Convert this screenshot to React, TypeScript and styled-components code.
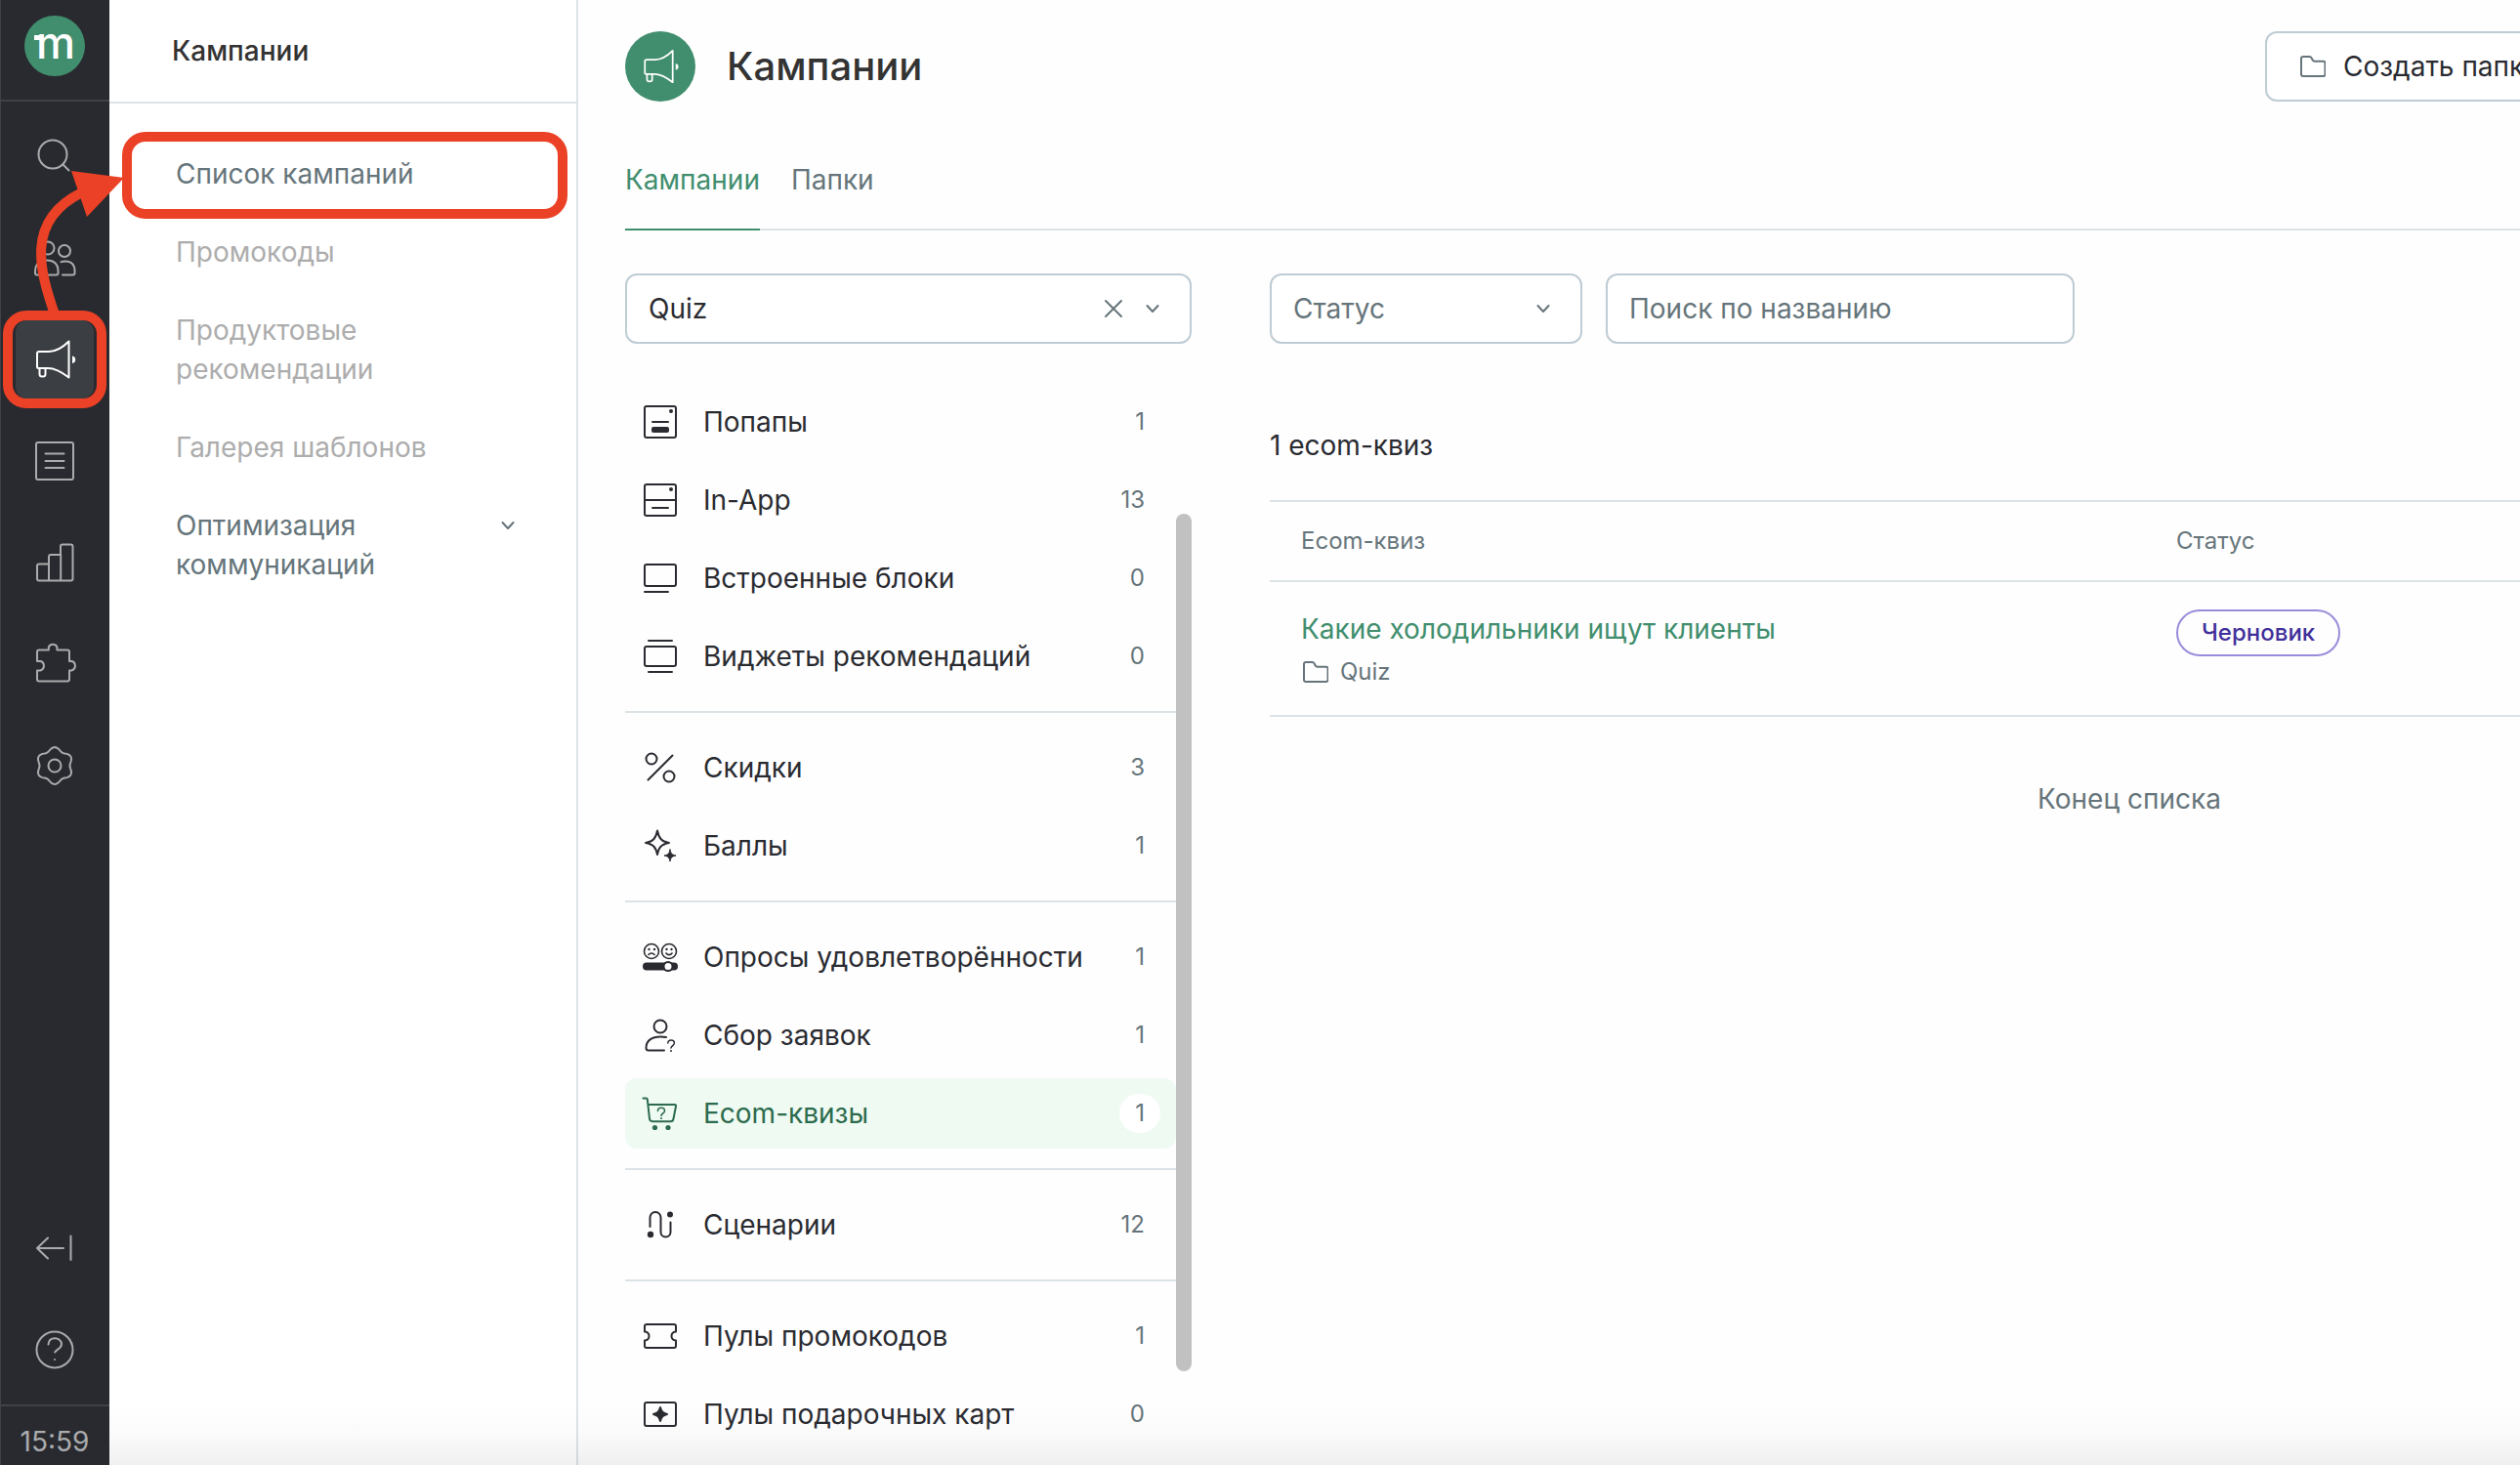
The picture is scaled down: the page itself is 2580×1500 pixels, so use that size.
import React from "react";
import styled, { createGlobalStyle, css } from "styled-components";

const color = {
  rail: "#292a2f",
  railActive: "#3b3e42",
  railLine: "#3f4146",
  railIcon: "#a9abad",
  green: "#418e6e",
  greenDark: "#2c6b4d",
  mint: "#effaf3",
  ink: "#2a2b31",
  title: "#333333",
  muted: "#66757b",
  disabled: "#adadad",
  line: "#dce3e6",
  field: "#bfccd4",
  mark: "#eb4126",
};

const GlobalStyle = createGlobalStyle`
  *, *::before, *::after { box-sizing: border-box; }
  body {
    margin: 0;
    overflow: hidden;
    background: #fefefe;
    color: ${color.ink};
    font: 400 28px/40px Inter, "Noto Sans", sans-serif;
  }
  button, input, select { font: inherit; color: inherit; }
  a { color: inherit; text-decoration: none; }
  svg { display: block; flex: none; }
`;

/* ---------- icons ---------- */

type IconProps = { size?: number; width?: number; children: React.ReactNode };

const Icon = ({ size = 48, width = 2, children }: IconProps) => (
  <svg
    width={size}
    height={size}
    viewBox="0 0 48 48"
    fill="none"
    stroke="currentColor"
    strokeWidth={width}
    strokeLinecap="round"
    strokeLinejoin="round"
    aria-hidden="true"
  >
    {children}
  </svg>
);

const gearOutline =
  Array.from({ length: 120 }, (_, i) => {
    const t = (i / 120) * Math.PI * 2;
    const r = 17.2 + 1.7 * Math.cos(6 * t);
    return `${i ? "L" : "M"}${(24 + r * Math.sin(t)).toFixed(2)} ${(24 - r * Math.cos(t)).toFixed(2)}`;
  }).join("") + "Z";

const SearchIcon = () => (
  <Icon>
    <circle cx="22" cy="22" r="14.5" />
    <path d="M32.5 32.5l6 6" />
  </Icon>
);
const PeopleIcon = () => (
  <Icon>
    <circle cx="17" cy="14" r="6.5" />
    <path d="M6 41.5c-1.5 0-2-.8-2-2V38c0-7.500 4.500-11.500 11.800-11.500S27.500 30.500 27.500 38v1.500c0 1.200-.5 2-2 2z" />
    <circle cx="34" cy="17" r="6" />
    <path d="M30.500 28.200c1.300-.5 2.800-.7 4.500-.7 5.800 0 9.500 3.500 9.500 10v2c0 1.200-.5 2-2 2H32" />
  </Icon>
);
const MegaphoneIcon = ({ size }: { size?: number }) => (
  <Icon size={size}>
    <path d="M8 16h10c7.500 0 14.500-4.500 20.500-10.500v37C32 37.500 25.500 33 17 33H7.500C6.500 33 6 32.300 6 31.500V18c0-1.200.8-2 2-2z" />
    <path d="M8.500 33v6c0 1.700.9 2.500 2.500 2.500h1c1.600 0 2.500-.8 2.500-2.500v-6" />
    <path d="M42 20.500a3.800 3.800 0 0 1 0 7.500z" fill="currentColor" stroke="none" />
  </Icon>
);
const ListIcon = () => (
  <Icon>
    <rect x="5" y="5" width="38" height="38" rx="2" />
    <path d="M14.500 16.500h19M14.500 24h19M14.500 31h19" />
  </Icon>
);
const ChartIcon = () => (
  <Icon>
    <path d="M18 42.500H8c-1.200 0-2-.8-2-2v-13c0-1.200.8-2 2-2h10V18c0-1.200.8-2 2-2h10V7.500c0-1.200.8-2 2-2h8.500c1.200 0 2 .8 2 2v33c0 1.200-.8 2-2 2zM18 25.500v17M30.200 16v26.500" />
  </Icon>
);
const PuzzleIcon = () => (
  <Icon>
    <path d="M8 9.500h9.800V6.500a4.800 4.800 0 0 1 8.600 0v3H37c1.200 0 2 .8 2 2V21h2.500a5 5 0 0 1 0 9.500H39v9c0 1.200-.8 2-2 2H8c-1.200 0-2-.8-2-2v-9h3.500a5 5 0 0 0 0-9.500H6v-9.500c0-1.200.8-2 2-2z" />
  </Icon>
);
const GearIcon = () => (
  <Icon>
    <path d={gearOutline} />
    <circle cx="24" cy="24" r="6.500" />
  </Icon>
);
const CollapseIcon = () => (
  <Icon>
    <path d="M33 24H6M17 13.500L6 24l11 10.500M40.500 11.500v24.500" />
  </Icon>
);
const HelpIcon = () => (
  <Icon>
    <circle cx="24" cy="24" r="18.500" />
    <path d="M17.500 18.500c.3-3.800 2.800-6.300 6.700-6.300 3.800 0 6.800 2.500 6.800 6 0 4.600-5.300 5.300-6.800 8.300" />
    <circle cx="24" cy="34" r="1" fill="currentColor" stroke="none" />
  </Icon>
);
const ChevronIcon = () => (
  <svg width="16" height="16" viewBox="0 0 16 16" fill="none" stroke="currentColor" strokeWidth="2" strokeLinecap="round" strokeLinejoin="round" aria-hidden="true">
    <path d="M2.500 5l5.500 6 5.500-6" />
  </svg>
);
const FolderIcon = () => (
  <svg width="28" height="28" viewBox="0 0 28 28" fill="none" stroke="currentColor" strokeWidth="2" strokeLinejoin="round" aria-hidden="true">
    <path d="M5.500 4H12c1 0 1.500.4 2 1.300l1.200 2.200c.5.9 1 1.200 2 1.200H26c1.200 0 2 .8 2 2V22c0 1.200-.8 2-2 2H5.500c-1.200 0-2-.8-2-2V6c0-1.200.8-2 2-2z" transform="translate(-.5)" />
  </svg>
);

const PopupIcon = () => (
  <Icon>
    <rect x="8" y="8" width="32" height="32" rx="2" />
    <circle cx="35" cy="13" r="2" fill="currentColor" stroke="none" />
    <path d="M16 24h16" />
    <rect x="15" y="29" width="18" height="6" rx="2" fill="currentColor" stroke="none" />
  </Icon>
);
const InAppIcon = () => (
  <Icon>
    <rect x="8" y="8" width="32" height="32" rx="2" />
    <circle cx="35" cy="13" r="2" fill="currentColor" stroke="none" />
    <path d="M8 24h32M16 32h16" />
  </Icon>
);
const BlockIcon = () => (
  <Icon>
    <rect x="8" y="10" width="32" height="22" rx="2" />
    <path d="M8 38h24" />
  </Icon>
);
const WidgetIcon = () => (
  <Icon>
    <path d="M12 8h24M12 40h24" />
    <rect x="8" y="14" width="32" height="20" rx="2" />
  </Icon>
);
const PercentIcon = () => (
  <Icon>
    <circle cx="15" cy="15" r="5.500" />
    <circle cx="33" cy="33" r="5.500" />
    <path d="M36.500 11.500l-25 25" />
  </Icon>
);
const SparkIcon = () => (
  <Icon>
    <path d="M21 8.500c1.500 7.500 4 11 12 12.500-8 1.500-10.500 4.500-12 12-1.500-7.500-4-10.500-12-12 8-1.500 10.500-5 12-12.500z" />
    <path d="M34 28c.8 4 2 5.200 6 6-4 .8-5.200 2-6 6-.8-4-2-5.200-6-6 4-.8 5.200-2 6-6z" fill="currentColor" strokeWidth="1" />
  </Icon>
);
const SurveyIcon = () => (
  <Icon>
    <circle cx="15" cy="18" r="7.500" strokeWidth="1.600" />
    <circle cx="33" cy="18" r="7.500" strokeWidth="1.600" />
    <g fill="currentColor" stroke="none">
      <circle cx="12.500" cy="16" r="1.200" />
      <circle cx="18" cy="16" r="1.200" />
      <circle cx="30.500" cy="16" r="1.200" />
      <circle cx="35.500" cy="16" r="1.200" />
    </g>
    <path d="M12 21.500c1.500-2 4.500-2 6 0M30 20c1.500 2.200 4.500 2.200 6 0" strokeWidth="1.600" />
    <rect x="6" y="29.500" width="36" height="8" rx="4" fill="currentColor" stroke="none" />
    <circle cx="32" cy="33.500" r="4.500" fill="#fff" />
  </Icon>
);
const LeadIcon = () => (
  <Icon>
    <circle cx="24" cy="15" r="6.500" />
    <path d="M30 26c-2-.5-4-.6-6-.6-8.500 0-14.500 4-14.500 11.600 0 1.800.8 2.500 2.500 2.500h16" />
    <path d="M31.800 32c0-1.900 1.400-3 3.200-3s3.400 1.200 3.400 3c0 2.400-3.100 2.600-3.400 5" strokeWidth="1.500" />
    <circle cx="35" cy="40" r="1" fill="currentColor" stroke="none" />
  </Icon>
);
const CartIcon = () => (
  <Icon>
    <path d="M6.500 8.500h3c.8 0 1.200.4 1.300 1.200L13 29.500c.2 1.800 1.200 2.700 3 2.700h18.500c1.800 0 2.700-.9 3-2.700L40 16.500c.2-1-.3-1.500-1.200-1.500H11.500" />
    <path d="M21.500 21.500c0-2 1.500-3.200 3.500-3.200s3.500 1.200 3.500 3.100c0 2.300-3 2.600-3.500 4.800" strokeWidth="1.600" />
    <g fill="currentColor" stroke="none">
      <circle cx="25" cy="29" r="1" />
      <circle cx="18.500" cy="38.500" r="2.600" />
      <circle cx="32" cy="38.500" r="2.600" />
    </g>
  </Icon>
);
const ScenarioIcon = () => (
  <Icon>
    <path d="M13.500 26v-9.500a5.500 5.500 0 0 1 11 0v15a5 5 0 0 0 10 0V21.500" />
    <circle cx="34" cy="13.500" r="3" fill="currentColor" stroke="none" />
    <circle cx="14" cy="34" r="3.200" fill="currentColor" stroke="none" />
  </Icon>
);
const TicketIcon = () => (
  <Icon>
    <path d="M10 12h28c1.200 0 2 .8 2 2v5.500c-3 .3-4.500 2-4.500 4.500s1.500 4.200 4.500 4.500V34c0 1.200-.8 2-2 2H10c-1.200 0-2-.8-2-2v-5.500c3-.3 4.500-2 4.500-4.500S11 19.800 8 19.500V14c0-1.200.8-2 2-2z" />
  </Icon>
);
const GiftCardIcon = () => (
  <Icon>
    <rect x="8" y="12" width="32" height="24" rx="2" />
    <path d="M24 17c1.200 4.500 2.500 5.800 7 7-4.500 1.200-5.800 2.500-7 7-1.200-4.500-2.500-5.800-7-7 4.500-1.200 5.800-2.500 7-7z" fill="currentColor" />
  </Icon>
);

/* ---------- shell ---------- */

const Shell = styled.div`
  position: relative;
  display: grid;
  grid-template-columns: 112px 480px minmax(0, 1fr);
  height: 100vh;
  overflow: hidden;
`;

const BottomShade = styled.div`
  position: absolute;
  inset: auto 0 0 112px;
  height: 64px;
  pointer-events: none;
  background: linear-gradient(to bottom, rgba(0, 0, 0, 0), rgba(0, 0, 0, 0.015) 50%, rgba(0, 0, 0, 0.06));
`;

/* ---------- rail ---------- */

const Rail = styled.nav`
  position: relative;
  z-index: 1;
  display: flex;
  flex-direction: column;
  align-items: center;
  background: ${color.rail};
  color: ${color.railIcon};
  box-shadow: inset 1px 0 ${color.railLine};
`;

const RailHead = styled.div`
  display: flex;
  justify-content: center;
  align-self: stretch;
  padding: 16px 0 24px;
  border-bottom: 2px solid ${color.railLine};
`;

const RailGroup = styled.div<{ $end?: boolean }>`
  display: flex;
  flex-direction: column;
  gap: 24px;
  padding: 16px 0;
  margin-top: ${(p) => (p.$end ? "auto" : "0")};
`;

const RailButton = styled.button<{ $active?: boolean }>`
  position: relative;
  display: grid;
  place-items: center;
  width: 80px;
  height: 80px;
  padding: 0;
  border: 0;
  border-radius: 12px;
  background: ${(p) => (p.$active ? color.railActive : "transparent")};
  color: ${(p) => (p.$active ? "#fff" : "inherit")};
`;

const Clock = styled.time`
  align-self: stretch;
  padding: 16px 0 4px;
  border-top: 2px solid ${color.railLine};
  text-align: center;
`;

const markFrame = css`
  position: absolute;
  border: 10px solid ${color.mark};
  border-radius: 24px;
  pointer-events: none;
`;

const ButtonMark = styled.span`
  ${markFrame}
  inset: -10px -13px;
`;

const ItemMark = styled.span`
  ${markFrame}
  inset: -3px 9px -6px 13px;
`;

const MarkArrow = styled.svg`
  position: absolute;
  left: 0;
  top: 160px;
  pointer-events: none;
`;

/* ---------- side panel ---------- */

const Side = styled.aside`
  border-right: 2px solid ${color.line};
  background: #fff;
`;

const SideTitle = styled.h2`
  margin: 0;
  padding: 32px 64px;
  border-bottom: 2px solid ${color.line};
  color: ${color.title};
  font-size: 28px;
  font-weight: 500;
  line-height: 40px;
`;

const SideMenu = styled.ul`
  margin: 0;
  padding: 32px 0;
  list-style: none;
`;

const SideItem = styled.li`
  position: relative;
`;

const SideLink = styled.a<{ $disabled?: boolean }>`
  display: flex;
  justify-content: space-between;
  padding: 20px 62px 20px 68px;
  color: ${(p) => (p.$disabled ? color.disabled : color.muted)};

  svg { margin-top: 12px; }
`;

/* ---------- main ---------- */

const Main = styled.main`
  overflow: hidden;
  padding: 32px 0 0 48px;
`;

/* The page is wider than the window and runs off its right edge. */
const Content = styled.div`
  width: calc(100vw - 160px);
`;

const Head = styled.header`
  display: flex;
  align-items: center;
  gap: 32px;
`;

const HeadBadge = styled.span`
  display: grid;
  place-items: center;
  width: 72px;
  height: 72px;
  border-radius: 50%;
  background: ${color.green};
  color: #fff;
`;

const Title = styled.h1`
  margin: 0;
  color: ${color.title};
  font-size: 40px;
  font-weight: 500;
  line-height: 48px;
`;

const Actions = styled.div`
  display: flex;
  width: 741px;
  margin-left: auto;
`;

const OutlineButton = styled.button`
  display: flex;
  align-items: center;
  gap: 18px;
  height: 72px;
  padding: 0 32px;
  border: 2px solid ${color.field};
  border-radius: 12px;
  background: #fff;
  white-space: nowrap;

  svg { color: ${color.muted}; }
`;

const Tabs = styled.nav`
  display: flex;
  gap: 32px;
  margin-top: 60px;
  box-shadow: inset 0 -2px ${color.line};
`;

const Tab = styled.a<{ $active?: boolean }>`
  padding-bottom: 30px;
  border-bottom: 2px solid ${(p) => (p.$active ? color.green : "transparent")};
  color: ${(p) => (p.$active ? color.green : color.muted)};
`;

const Columns = styled.div`
  display: grid;
  grid-template-columns: 580px minmax(0, 1fr);
  gap: 80px;
  margin-top: 44px;
`;

const fieldBox = css`
  width: 100%;
  height: 72px;
  padding: 0 22px;
  border: 2px solid ${color.field};
  border-radius: 12px;
  outline: 0;
  background: #fff;
`;

const SelectWrap = styled.div`
  position: relative;
`;

const Select = styled.select<{ $filled?: boolean }>`
  ${fieldBox}
  appearance: none;
  color: ${(p) => (p.$filled ? color.ink : color.muted)};
`;

const SelectTools = styled.div`
  position: absolute;
  inset: 0 32px 0 auto;
  display: flex;
  align-items: center;
  gap: 18px;
  color: ${color.muted};
  pointer-events: none;
`;

const ClearButton = styled.button`
  display: grid;
  place-items: center;
  padding: 0;
  border: 0;
  background: none;
  pointer-events: auto;
`;

const SearchInput = styled.input`
  ${fieldBox}
  &::placeholder { color: ${color.muted}; opacity: 1; }
`;

const ListArea = styled.div`
  display: grid;
  grid-template-columns: minmax(0, 1fr) 16px;
  margin-top: 44px;
`;

const Group = styled.ul`
  display: grid;
  gap: 8px;
  margin: 0;
  padding: 0 0 20px;
  list-style: none;

  & + & {
    padding-top: 20px;
    border-top: 2px solid ${color.line};
  }
`;

const Channel = styled.a<{ $active?: boolean }>`
  display: flex;
  align-items: center;
  gap: 20px;
  height: 72px;
  padding: 0 16px 0 12px;
  border-radius: 12px;
  background: ${(p) => (p.$active ? color.mint : "transparent")};
  color: ${(p) => (p.$active ? color.greenDark : color.ink)};
`;

const Count = styled.span<{ $active?: boolean }>`
  margin-left: auto;
  padding: 0 16px;
  border-radius: 20px;
  background: ${(p) => (p.$active ? "#fff" : "transparent")};
  color: ${color.muted};
  font-size: 24px;
`;

const ScrollThumb = styled.div`
  height: 878px;
  margin-top: 130px;
  border-radius: 8px;
  background: #c1c1c1;
`;

const Filters = styled.div`
  display: grid;
  grid-template-columns: 320px 480px;
  gap: 24px;
`;

const Total = styled.p`
  margin: 84px 0 36px;
`;

const Table = styled.table`
  width: 100%;
  border-collapse: separate;
  border-spacing: 0;
  table-layout: fixed;
  border-top: 2px solid ${color.line};
  text-align: left;

  th, td {
    padding: 28px 32px;
    border-bottom: 2px solid ${color.line};
    vertical-align: top;
  }
  th {
    padding: 20px 32px;
    color: ${color.muted};
    font-size: 24px;
    font-weight: 400;
  }
  th:first-child { width: 896px; }
`;

const RowLink = styled.a`
  display: block;
  color: ${color.green};
`;

const FolderLink = styled.a`
  display: flex;
  align-items: center;
  gap: 12px;
  margin-top: 8px;
  color: ${color.muted};
  font-size: 24px;
  line-height: 32px;
`;

const Status = styled.span`
  display: inline-block;
  padding: 0 24px;
  border: 2px solid #9b8cdb;
  border-radius: 24px;
  color: #41309b;
  font-size: 24px;
  font-weight: 500;
  line-height: 44px;
  vertical-align: top;
`;

const ListEnd = styled.p`
  margin: 64px 0 0;
  color: ${color.muted};
  text-align: center;
`;

/* ---------- data ---------- */

const railTop = [
  { label: "Поиск", icon: <SearchIcon /> },
  { label: "Клиенты", icon: <PeopleIcon /> },
  { label: "Кампании", icon: <MegaphoneIcon />, active: true },
  { label: "Списки", icon: <ListIcon /> },
  { label: "Отчёты", icon: <ChartIcon /> },
  { label: "Интеграции", icon: <PuzzleIcon /> },
  { label: "Настройки", icon: <GearIcon /> },
];

const sideItems = [
  { label: "Список кампаний", marked: true },
  { label: "Промокоды", disabled: true },
  { label: "Продуктовые рекомендации", disabled: true },
  { label: "Галерея шаблонов", disabled: true },
  { label: "Оптимизация коммуникаций", expandable: true },
];

const groups = [
  [
    { label: "Попапы", count: 1, icon: <PopupIcon /> },
    { label: "In-App", count: 13, icon: <InAppIcon /> },
    { label: "Встроенные блоки", count: 0, icon: <BlockIcon /> },
    { label: "Виджеты рекомендаций", count: 0, icon: <WidgetIcon /> },
  ],
  [
    { label: "Скидки", count: 3, icon: <PercentIcon /> },
    { label: "Баллы", count: 1, icon: <SparkIcon /> },
  ],
  [
    { label: "Опросы удовлетворённости", count: 1, icon: <SurveyIcon /> },
    { label: "Сбор заявок", count: 1, icon: <LeadIcon /> },
    { label: "Ecom-квизы", count: 1, icon: <CartIcon />, active: true },
  ],
  [{ label: "Сценарии", count: 12, icon: <ScenarioIcon /> }],
  [
    { label: "Пулы промокодов", count: 1, icon: <TicketIcon /> },
    { label: "Пулы подарочных карт", count: 0, icon: <GiftCardIcon /> },
  ],
];

const Logo = () => (
  <svg width="62" height="62" viewBox="0 0 62 62" aria-hidden="true">
    <circle cx="31" cy="31" r="31" fill={color.green} />
    <rect x="10" y="20" width="6" height="5" fill="#fff" />
    <text x="32" y="44" textAnchor="middle" fill="#fff" fontFamily="Inter, sans-serif" fontSize="45" fontWeight="500">
      m
    </text>
  </svg>
);

export default function App() {
  return (
    <>
      <GlobalStyle />
      <Shell>
        <Rail>
          <RailHead>
            <Logo />
          </RailHead>
          <RailGroup>
            {railTop.map((item) => (
              <RailButton key={item.label} type="button" aria-label={item.label} $active={item.active}>
                {item.icon}
                {item.active && <ButtonMark />}
              </RailButton>
            ))}
          </RailGroup>
          <RailGroup $end>
            <RailButton type="button" aria-label="Свернуть">
              <CollapseIcon />
            </RailButton>
            <RailButton type="button" aria-label="Помощь">
              <HelpIcon />
            </RailButton>
          </RailGroup>
          <Clock>15:59</Clock>
          <MarkArrow width="130" height="164" viewBox="0 160 130 164" fill="none" aria-hidden="true">
            <path d="M56 322C41 278 25 226 84 197" stroke={color.mark} strokeWidth="10" />
            <path d="M73 175l54 7-38 40z" fill={color.mark} />
          </MarkArrow>
        </Rail>

        <Side>
          <SideTitle>Кампании</SideTitle>
          <SideMenu>
            {sideItems.map((item) => (
              <SideItem key={item.label}>
                <SideLink href="#" $disabled={item.disabled}>
                  {item.label}
                  {item.expandable && <ChevronIcon />}
                </SideLink>
                {item.marked && <ItemMark />}
              </SideItem>
            ))}
          </SideMenu>
        </Side>

        <Main>
          <Content>
            <Head>
              <HeadBadge>
                <MegaphoneIcon size={42} />
              </HeadBadge>
              <Title>Кампании</Title>
              <Actions>
                <OutlineButton type="button">
                  <FolderIcon />
                  Создать папку
                </OutlineButton>
              </Actions>
            </Head>

            <Tabs>
              <Tab href="#" $active>
                Кампании
              </Tab>
              <Tab href="#">Папки</Tab>
            </Tabs>

            <Columns>
              <section>
                <SelectWrap>
                  <Select $filled aria-label="Папка" defaultValue="Quiz">
                    <option>Quiz</option>
                  </Select>
                  <SelectTools>
                    <ClearButton type="button" aria-label="Очистить">
                      <svg width="28" height="28" viewBox="0 0 28 28" fill="none" stroke="currentColor" strokeWidth="2" strokeLinecap="round">
                        <path d="M6 6l16 16M22 6L6 22" />
                      </svg>
                    </ClearButton>
                    <ChevronIcon />
                  </SelectTools>
                </SelectWrap>

                <ListArea>
                  <div>
                    {groups.map((group) => (
                      <Group key={group[0].label}>
                        {group.map((item) => (
                          <li key={item.label}>
                            <Channel href="#" $active={"active" in item}>
                              {item.icon}
                              {item.label}
                              <Count $active={"active" in item}>{item.count}</Count>
                            </Channel>
                          </li>
                        ))}
                      </Group>
                    ))}
                  </div>
                  <ScrollThumb />
                </ListArea>
              </section>

              <section>
                <Filters>
                  <SelectWrap>
                    <Select aria-label="Статус" defaultValue="Статус">
                      <option>Статус</option>
                    </Select>
                    <SelectTools>
                      <ChevronIcon />
                    </SelectTools>
                  </SelectWrap>
                  <SearchInput type="search" aria-label="Поиск по названию" placeholder="Поиск по названию" />
                </Filters>

                <Total>1 ecom-квиз</Total>

                <Table>
                  <thead>
                    <tr>
                      <th scope="col">Ecom-квиз</th>
                      <th scope="col">Статус</th>
                    </tr>
                  </thead>
                  <tbody>
                    <tr>
                      <td>
                        <RowLink href="#">Какие холодильники ищут клиенты</RowLink>
                        <FolderLink href="#">
                          <FolderIcon />
                          Quiz
                        </FolderLink>
                      </td>
                      <td>
                        <Status>Черновик</Status>
                      </td>
                    </tr>
                  </tbody>
                </Table>

                <ListEnd>Конец списка</ListEnd>
              </section>
            </Columns>
          </Content>
        </Main>
        <BottomShade />
      </Shell>
    </>
  );
}
